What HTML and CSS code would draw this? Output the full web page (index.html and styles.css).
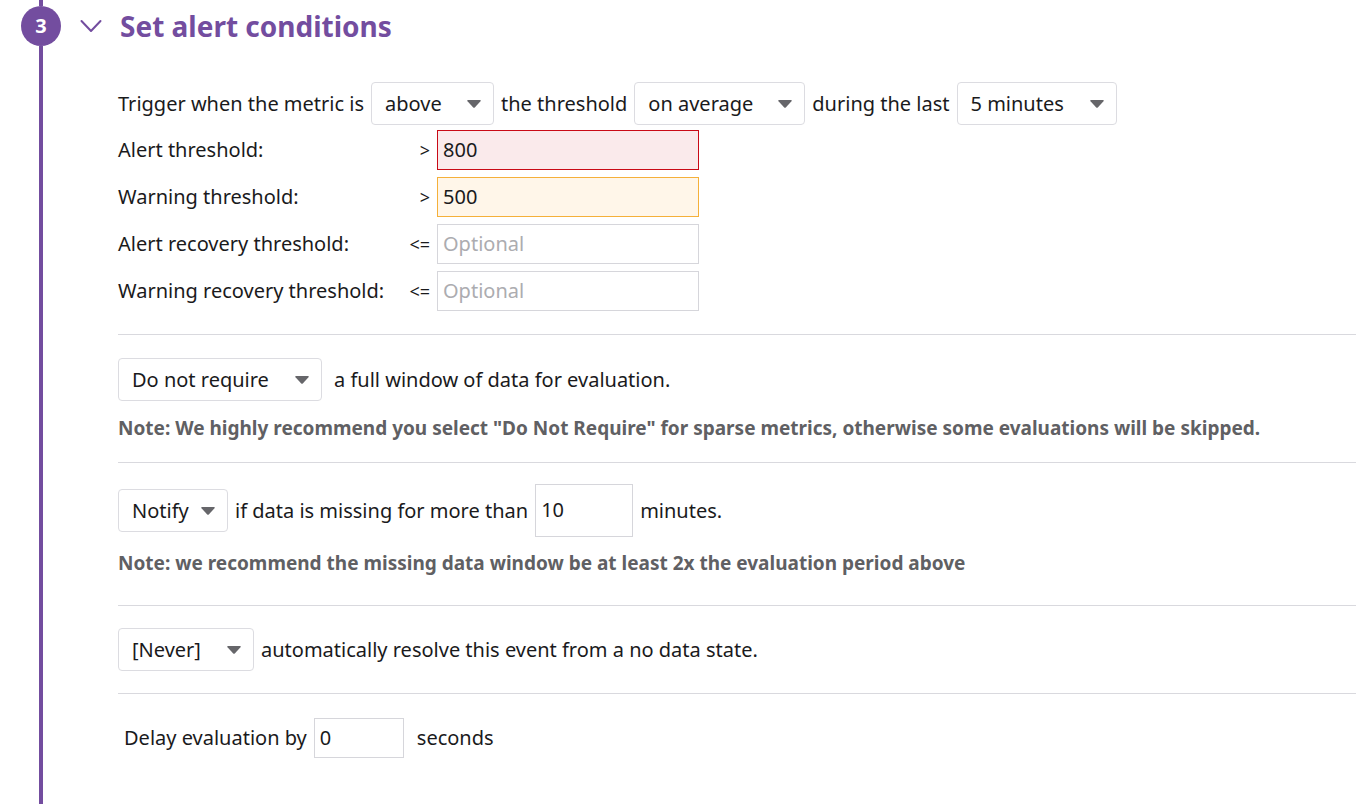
FILE: index.html
```html
<!DOCTYPE html>
<html lang="en">
<head>
<meta charset="utf-8">
<meta name="viewport" content="width=device-width, initial-scale=1">
<title>Set alert conditions</title>
<link rel="stylesheet" href="styles.css">
</head>
<body>
<svg class="defs" aria-hidden="true"><symbol id="caret" viewBox="0 0 14 8"><path d="M1 0H13Q14.500 0 13.500 1.200L8 7.300Q7 8.300 6 7.300L.5 1.200Q-.5 0 1 0Z"/></symbol></svg>
<main class="step">
  <div class="rail"><span class="step-number">3</span></div>
  <div class="content">
    <header class="header">
      <button class="toggle" type="button" aria-label="Collapse section" aria-expanded="true">
        <svg class="chevron" viewBox="0 0 22 14"><path d="M1.500 2L11 12L20.500 2"/></svg>
      </button>
      <h1 class="title">Set alert conditions</h1>
    </header>
    <form class="body">
      <section class="section section-thresholds">
        <div class="line">
          <label for="cmp">Trigger when the metric is</label>
          <span class="picker picker-xs"><select id="cmp"><option>above</option><option>below</option></select><svg class="caret"><use href="#caret"/></svg></span>
          <label for="agg">the threshold</label>
          <span class="picker picker-md"><select id="agg"><option>on average</option><option>in total</option></select><svg class="caret"><use href="#caret"/></svg></span>
          <label for="win">during the last</label>
          <span class="picker picker-sm"><select id="win"><option>5 minutes</option><option>1 hour</option></select><svg class="caret"><use href="#caret"/></svg></span>
        </div>
        <div class="thresholds">
          <label for="alert">Alert threshold:</label><span class="operator">&gt;</span><input class="field field-alert" id="alert" type="text" value="800">
          <label for="warn">Warning threshold:</label><span class="operator">&gt;</span><input class="field field-warning" id="warn" type="text" value="500">
          <label for="alert-rec">Alert recovery threshold:</label><span class="operator">&lt;=</span><input class="field" id="alert-rec" type="text" placeholder="Optional">
          <label for="warn-rec">Warning recovery threshold:</label><span class="operator">&lt;=</span><input class="field" id="warn-rec" type="text" placeholder="Optional">
        </div>
      </section>
      <section class="section section-window">
        <div class="line line-wide">
          <span class="picker picker-lg"><select id="full"><option>Do not require</option><option>Require</option></select><svg class="caret"><use href="#caret"/></svg></span>
          <label for="full">a full window of data for evaluation.</label>
        </div>
        <p class="note">Note: We highly recommend you select "Do Not Require" for sparse metrics, otherwise some evaluations will be skipped.</p>
      </section>
      <section class="section section-missing">
        <div class="line">
          <span class="picker picker-notify"><select id="notify" aria-label="Missing data action"><option>Notify</option></select><svg class="caret"><use href="#caret"/></svg></span>
          <label for="missing">if data is missing for more than</label>
          <input class="field field-minutes" id="missing" type="text" value="10">
          <span>minutes.</span>
        </div>
        <p class="note">Note: we recommend the missing data window be at least 2x the evaluation period above</p>
      </section>
      <section class="section section-resolve">
        <div class="line">
          <span class="picker picker-never"><select id="resolve"><option>[Never]</option></select><svg class="caret"><use href="#caret"/></svg></span>
          <label for="resolve">automatically resolve this event from a no data state.</label>
        </div>
      </section>
      <section class="section section-delay">
        <div class="line">
          <label for="delay">Delay evaluation by</label>
          <input class="field field-seconds" id="delay" type="text" value="0">
          <span class="unit">seconds</span>
        </div>
      </section>
    </form>
  </div>
</main>
</body>
</html>
```

FILE: styles.css
```css
* { box-sizing: border-box; }
body {
  margin: 0;
  background: #fff;
  color: #1a1a1c;
  font: 20px/28px "Noto Sans", sans-serif;
}
.defs { display: none; }
.step {
  display: flex;
  min-height: 100vh;
}
.rail {
  display: flex;
  flex-direction: column;
  align-items: center;
  flex: none;
  width: 40px;
  margin-left: 21px;
}
.rail::before, .rail::after {
  content: "";
  width: 4px;
  height: 6px;
  background: #734d9f;
}
.rail::after { flex: 1; }
.step-number {
  width: 40px;
  height: 40px;
  border-radius: 50%;
  background: #734d9f;
  color: #fff;
  font-size: 20px;
  font-weight: 700;
  line-height: 40px;
  text-align: center;
}
.content {
  flex: 1;
  min-width: 0;
}
.header {
  display: flex;
  align-items: center;
  gap: 18px;
  height: 52px;
  padding-left: 19px;
}
.toggle {
  display: flex;
  padding: 0;
  border: 0;
  background: none;
  cursor: pointer;
}
.chevron {
  width: 22px;
  height: 14px;
  fill: none;
  stroke: #734d9f;
  stroke-width: 2;
  stroke-linecap: round;
  stroke-linejoin: round;
}
.title {
  margin: 0;
  color: #734d9f;
  font-size: 28px;
  line-height: 36px;
}
.body { padding-left: 57px; }
.section + .section { border-top: 1px solid #d9d9de; }
.section-thresholds { padding: 30px 0 23px; }
.section-window { padding: 23px 0 20px; }
.section-missing { padding: 21px 0 28px; }
.section-resolve { padding: 22px 0; }
.section-delay { padding: 24px 6px; }
.line {
  display: flex;
  align-items: center;
  gap: 7px;
}
.line-wide { gap: 12px; }
.unit { margin-left: 6px; }
.picker {
  position: relative;
  flex: none;
}
.picker select {
  display: block;
  width: 100%;
  height: 43px;
  padding: 0 12px 0 13px;
  appearance: none;
  border: 1px solid #dcdce1;
  border-radius: 4px;
  background: #fff;
  color: inherit;
  font: inherit;
}
.caret {
  position: absolute;
  top: 18px;
  right: 13px;
  width: 14px;
  height: 8px;
  fill: #66666a;
  pointer-events: none;
}
.picker-xs { width: 123px; }
.picker-sm { width: 160px; }
.picker-md { width: 171px; }
.picker-lg { width: 204px; }
.picker-notify { width: 110px; }
.picker-never { width: 136px; }
.thresholds {
  display: grid;
  grid-template-columns: 279px 40px 262px;
  row-gap: 7px;
  align-items: center;
  margin-top: 5px;
}
.operator {
  padding-right: 7px;
  font-size: 18px;
  text-align: right;
}
.field {
  width: 100%;
  height: 40px;
  padding: 0 5px 2px;
  border: 1px solid #d6d6db;
  border-radius: 0;
  background: #fff;
  color: inherit;
  font: inherit;
}
.field::placeholder {
  color: #acacb0;
  opacity: 1;
}
.field-alert {
  border-color: #c90a16;
  background: #faeaeb;
}
.field-warning {
  border-color: #f5b03a;
  background: #fff6e9;
}
.field-minutes {
  width: 98px;
  height: 53px;
}
.field-seconds { width: 90px; }
.note {
  margin: 13px 0 0;
  color: #606063;
  font-size: 19px;
  font-weight: 700;
}
.section-missing .note { margin-top: 12px; }
```
